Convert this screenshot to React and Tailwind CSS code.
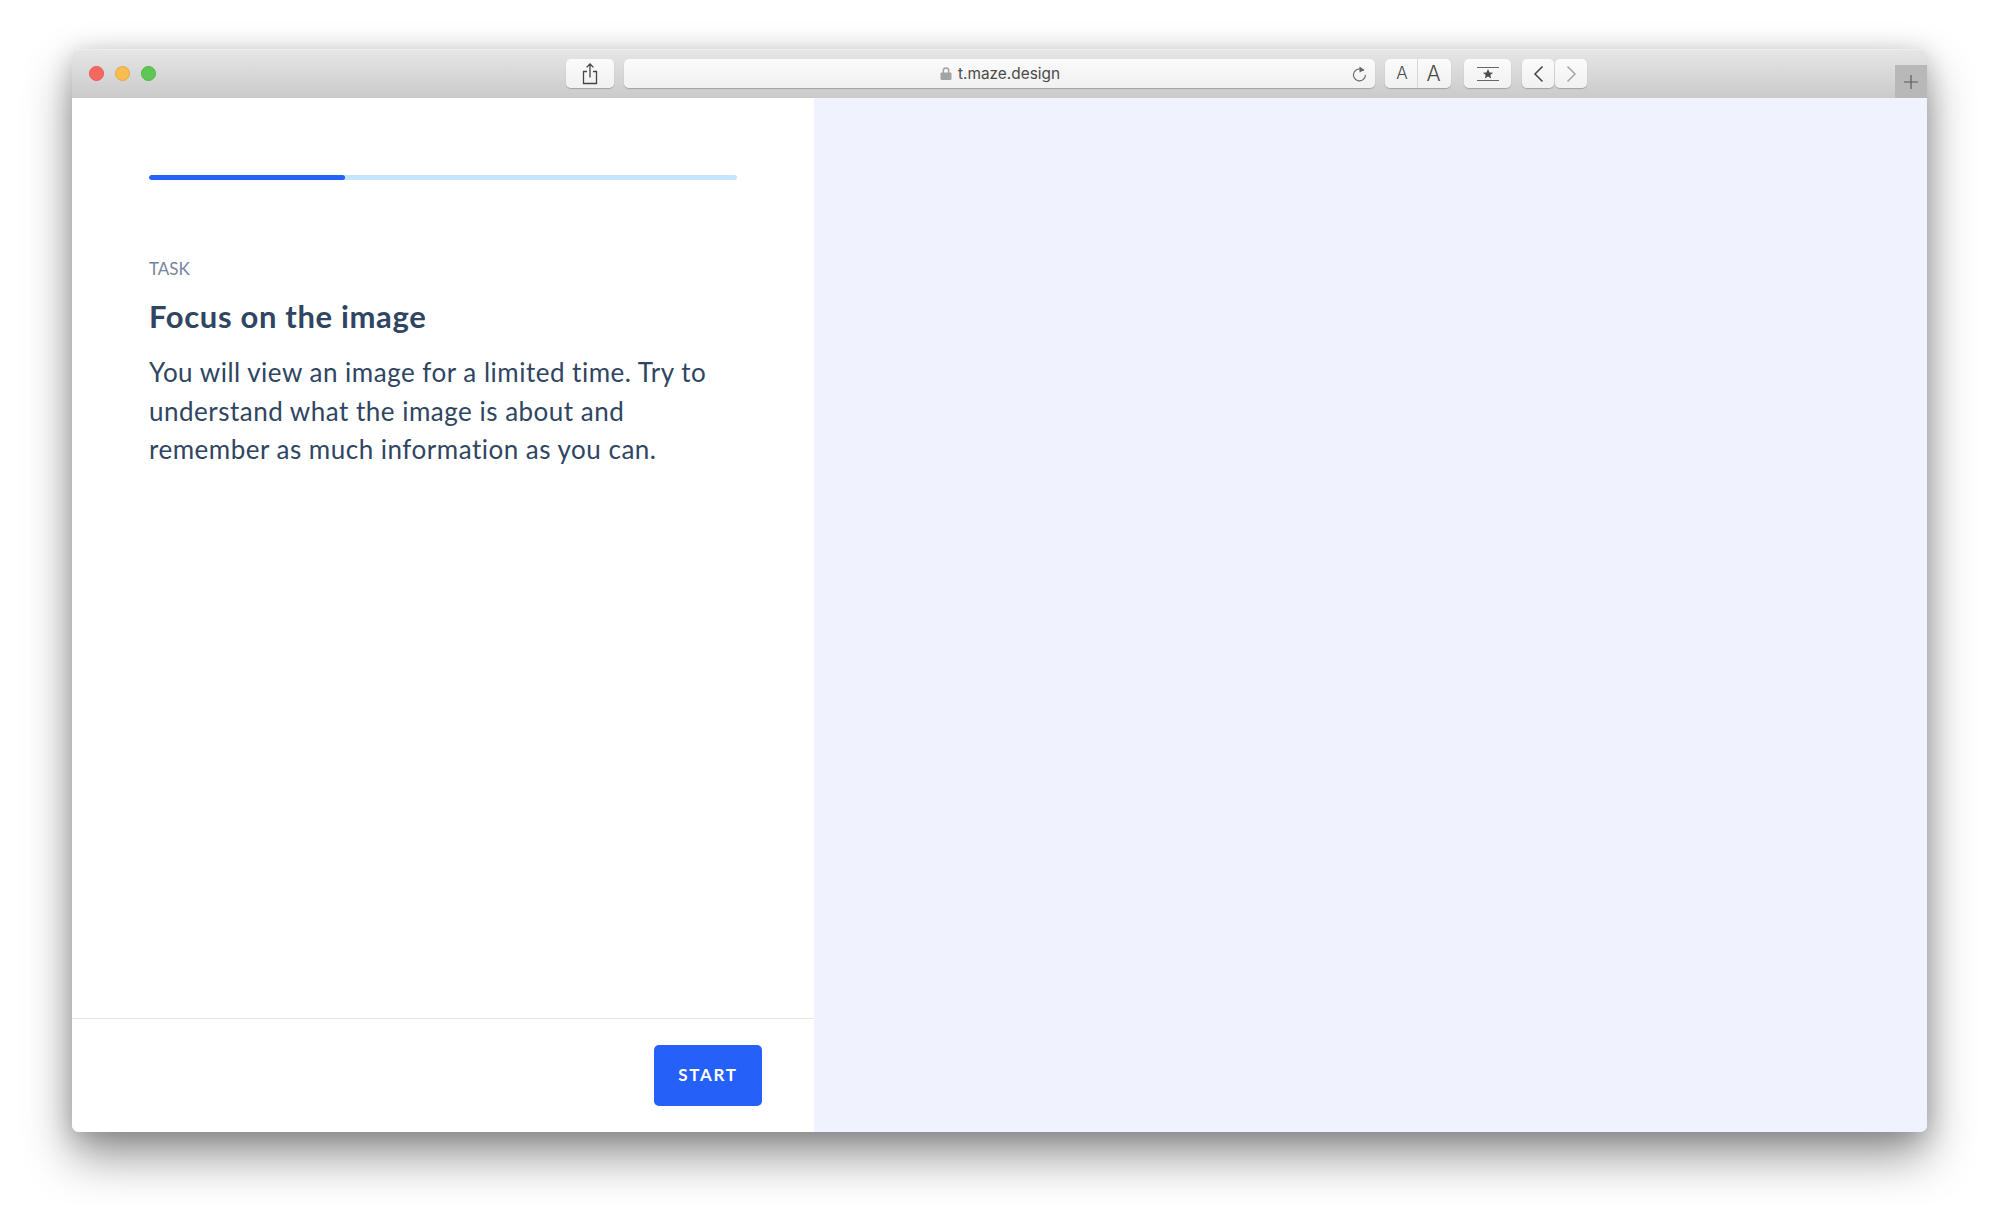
import React from "react";

const btn = "h-[29px] bg-gradient-to-b from-[#fbfbfb] to-[#f1f1f1] rounded-[5px] shadow-[0_1px_1px_rgba(0,0,0,0.22)] flex items-center justify-center";

export default function App() {
  return (
    <div className="w-[1999px] h-[1228px] bg-white overflow-hidden pl-[72px] pt-[49px] font-['Lato',sans-serif]">
      <div className="w-[1855px] h-[1083px] rounded-[7px] overflow-hidden flex flex-col shadow-[0_24px_48px_rgba(0,0,0,0.42),0_4px_24px_rgba(0,0,0,0.18)]">
        <div className="h-[49px] shrink-0 flex items-start bg-gradient-to-b from-[#e6e6e6] to-[#cacaca] border-t border-[#eeeeee]">
          <div className="flex gap-[11px] ml-[17px] mt-[16px]">
            <span className="w-[15px] h-[15px] rounded-full bg-[#f4685f] border border-[#e5584f]" />
            <span className="w-[15px] h-[15px] rounded-full bg-[#f8bd4f] border border-[#e5a93f]" />
            <span className="w-[15px] h-[15px] rounded-full bg-[#5fc753] border border-[#50b644]" />
          </div>
          <div className={`${btn} w-[48px] ml-[410px] mt-[9px]`}>
            <svg width="16" height="22" viewBox="0 0 16 22" fill="none" stroke="#444" strokeWidth="1.3">
              <path d="M5 8.5H1.5V20.5H14.5V8.5H11" />
              <path d="M8 14.5V1M4.6 4.4L8 1l3.4 3.4" />
            </svg>
          </div>
          <div className={`${btn} w-[751px] ml-[10px] mt-[9px] relative`}>
            <svg width="12" height="13" viewBox="0 0 12 13" className="mr-[6px] ml-[1px]">
              <path d="M3.3 6V3.7a2.7 2.7 0 015.4 0V6" fill="none" stroke="#a3a3a3" strokeWidth="1.5" />
              <rect x="0.5" y="5.5" width="11" height="7.5" rx="1" fill="#a3a3a3" />
            </svg>
            <span className="text-[15.4px] leading-none text-[#4a4a4a] font-['Inter',sans-serif]">t.maze.design</span>
            <svg width="17" height="18" viewBox="0 0 17 18" fill="none" className="absolute right-[7px] top-[6px]">
              <path d="M12.6 5.5A6 6 0 1 0 14.5 10" stroke="#666" strokeWidth="1.1" />
              <path d="M8.5 1.5L13.5 5L8.5 7.5Z" fill="#666" />
            </svg>
          </div>
          <div className={`${btn} w-[66px] ml-[10px] mt-[9px]`}>
            <span className="w-[33px] h-full pl-[2px] flex items-center justify-center border-r border-[#d6d6d6] text-[17px] leading-none text-[#4c4c4c] font-['Inter',sans-serif] font-light">A</span>
            <span className="w-[33px] h-full pr-[2px] flex items-center justify-center text-[21px] leading-none text-[#4c4c4c] font-['Inter',sans-serif] font-light">A</span>
          </div>
          <div className={`${btn} w-[47px] ml-[13px] mt-[9px]`}>
            <svg width="22" height="20" viewBox="0 0 22 20">
              <path d="M0 3.5H22M0 16.5H22" stroke="#666" strokeWidth="1" />
              <path d="M11 5l1.5 3.4 3.6.3-2.8 2.3.9 3.5L11 12.6l-3.2 1.9.9-3.5L5.9 8.7l3.6-.3z" fill="#4c4c4c" />
            </svg>
          </div>
          <div className={`${btn} w-[32px] ml-[11px] mt-[9px]`}>
            <svg width="11" height="18" viewBox="0 0 11 18" fill="none" stroke="#444" strokeWidth="1.5">
              <path d="M9.5 1.5L2 9l7.5 7.5" />
            </svg>
          </div>
          <div className={`${btn} w-[32px] ml-[1px] mt-[9px]`}>
            <svg width="11" height="18" viewBox="0 0 11 18" fill="none" stroke="#a5a5a5" strokeWidth="1.5">
              <path d="M1.5 1.5L9 9l-7.5 7.5" />
            </svg>
          </div>
          <div className="ml-auto mt-[15px] w-[32px] h-[33px] bg-[#b8b8b8] flex items-center justify-center">
            <svg width="16" height="16" viewBox="0 0 16 16" stroke="#5a5a5a" strokeWidth="1.2">
              <path d="M8 1v14M1 8h14" />
            </svg>
          </div>
        </div>
        <div className="flex-1 flex min-h-0">
          <div className="w-[742px] shrink-0 bg-white flex flex-col">
            <div className="flex-1 px-[77px] pt-[77px]">
              <div className="h-[5px] bg-[#c6e4fd] rounded-full overflow-hidden">
                <div className="h-full w-[196px] bg-[#2560f8] rounded-full" />
              </div>
              <div className="mt-[78px] text-[17px] leading-[22px] text-[#76859b]">TASK</div>
              <h1 className="mt-[17px] text-[31px] leading-[38px] font-bold tracking-[0.65px] text-[#2f4562]">Focus on the image</h1>
              <p className="mt-[18px] max-w-[575px] text-[26px] leading-[38.5px] tracking-[0.5px] text-[#2f4562]">
                You will view an image for a limited time. Try to understand what the image is about and remember as much information as you can.
              </p>
            </div>
            <div className="h-[114px] shrink-0 border-t border-[#e8e8e8] flex justify-end items-start pt-[26px] pr-[52px]">
              <button className="w-[108px] h-[61px] pb-[2px] rounded-[5px] bg-[#2560f8] text-white text-[17px] font-bold tracking-[1.7px] leading-none">START</button>
            </div>
          </div>
          <div className="flex-1 bg-[#f0f3fe]" />
        </div>
      </div>
    </div>
  );
}
